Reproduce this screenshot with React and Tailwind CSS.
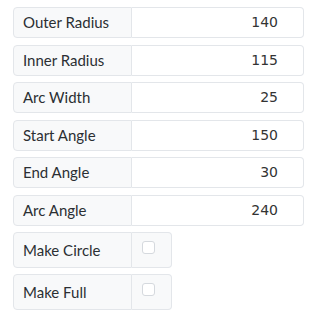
import React from 'react';

const fields = [
  { label: 'Outer Radius', value: 140 },
  { label: 'Inner Radius', value: 115 },
  { label: 'Arc Width', value: 25 },
  { label: 'Start Angle', value: 150 },
  { label: 'End Angle', value: 30 },
  { label: 'Arc Angle', value: 240 },
];

const toggles = ['Make Circle', 'Make Full'];

function App() {
  return (
    <div className="min-h-screen bg-white pl-[13px] pr-[16px] pt-[7px] font-['Lato','Noto_Sans',sans-serif] text-[15px] text-[#2b2f33]">
      {/* Number inputs */}
      {fields.map((f) => (
        <div key={f.label} className="mb-[6.5px] flex h-[31px]">
          <span className="flex w-[119px] items-center rounded-l-[4px] border border-[#e3e6ea] bg-[#f8f9fa] pl-[9px]">
            {f.label}
          </span>
          <input
            type="text"
            readOnly
            value={f.value}
            className="min-w-0 flex-1 rounded-r-[4px] border border-l-0 border-[#e3e6ea] bg-white pr-[25px] text-right font-['DejaVu_Sans',sans-serif] text-[14px] text-[#333] outline-none"
          />
        </div>
      ))}

      {/* Checkboxes */}
      {toggles.map((t) => (
        <div key={t} className="mb-[6px] flex h-[36px] w-[159px]">
          <span className="flex w-[119px] items-center rounded-l-[4px] border border-[#e3e6ea] bg-[#f8f9fa] pl-[9px]">
            {t}
          </span>
          <div className="flex-1 rounded-r-[4px] border border-l-0 border-[#e3e6ea] bg-[#f8f9fa] pl-[10px] pt-[8px]">
            <span className="block h-[13px] w-[13px] rounded-[3px] border border-[#d5d9de] bg-white" />
          </div>
        </div>
      ))}
    </div>
  );
}

export default App;
